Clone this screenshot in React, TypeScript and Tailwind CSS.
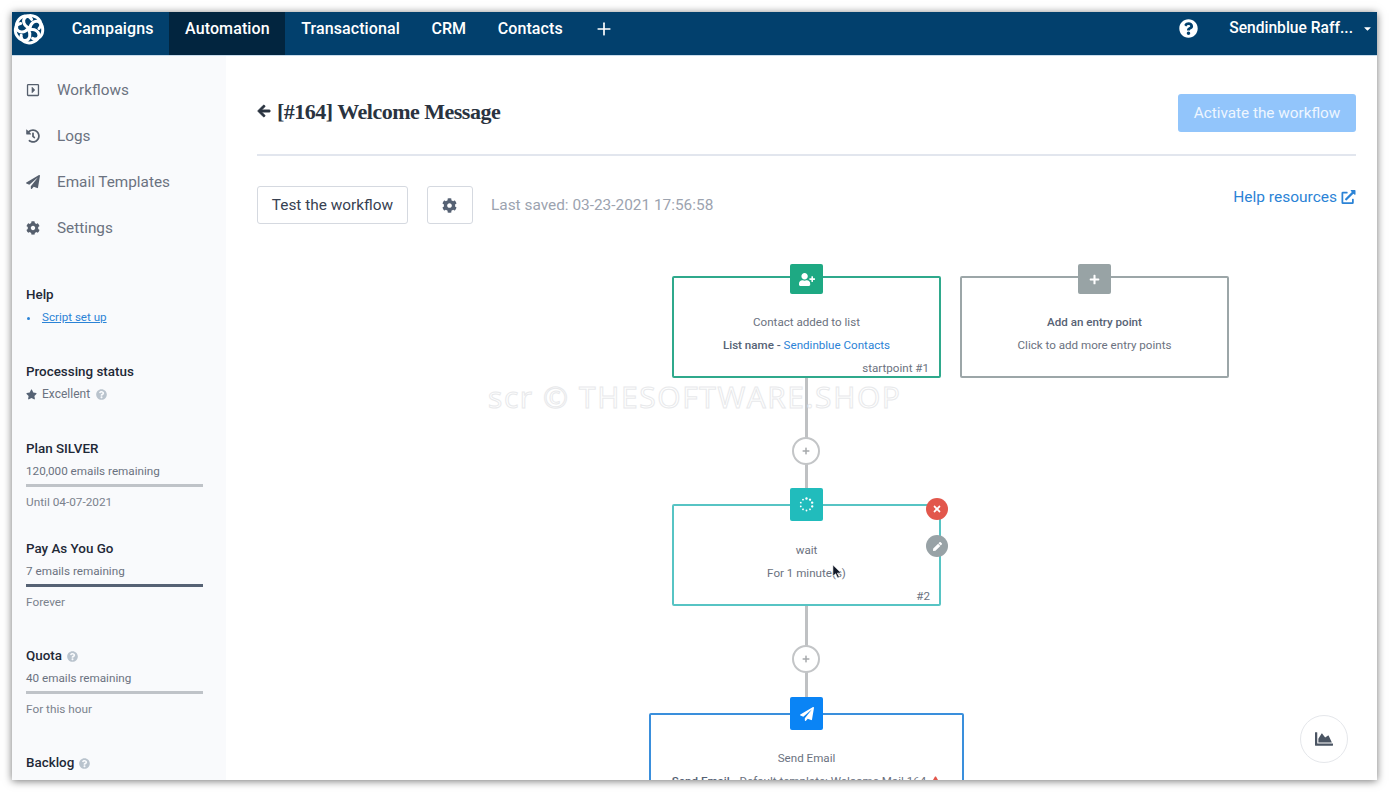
import type { ReactNode } from "react";
import { Plus } from "lucide-react";
import {
  FaRegCaretSquareRight,
  FaHistory,
  FaPaperPlane,
  FaCog,
  FaStar,
  FaQuestionCircle,
  FaArrowLeft,
  FaExternalLinkAlt,
  FaUserPlus,
  FaTimes,
  FaPen,
  FaPlus,
  FaChartArea,
  FaCaretDown,
  FaExclamationTriangle,
} from "react-icons/fa";

const tabs = ["Campaigns", "Automation", "Transactional", "CRM", "Contacts"];

function Logo() {
  const petals = [0, 72, 144, 216, 288];
  return (
    <svg viewBox="0 0 32 32" className="h-[32px] w-[32px]" fill="none" stroke="#fff" strokeWidth="3" strokeLinecap="round">
      {petals.map((a) => (
        <g key={a} transform={`rotate(${a} 16 16)`}>
          <path d="M16 15C11 13 9 8 12 4.6C16 1 24 2.5 27 8C28.5 11 27.5 14 26 15.5" />
        </g>
      ))}
    </svg>
  );
}

function TopBar() {
  return (
    <header className="flex h-[44px] shrink-0 items-stretch border-b border-[#c9dcec] bg-[#02406d] text-white">
      <div className="flex w-[44px] items-center pb-[10px] pl-[1px]">
        <Logo />
      </div>
      {tabs.map((t) => (
        <a
          key={t}
          className={`flex items-center px-[15.75px] pb-[10px] text-[16px] font-medium tracking-[0.1px] ${t === "Automation" ? "bg-[#02253f]" : ""}`}
        >
          {t}
        </a>
      ))}
      <div className="flex items-center pb-[10px] pl-[15px]">
        <Plus className="h-[20px] w-[20px]" strokeWidth={2} />
      </div>
      <div className="ml-auto flex items-center pb-[10px] pr-[4px]">
        <FaQuestionCircle className="h-[19px] w-[19px]" />
        <span className="ml-[31px] text-[15.6px] font-medium">Sendinblue Raff...</span>
        <FaCaretDown className="ml-[9px] h-[11px] w-[11px]" />
      </div>
    </header>
  );
}

function NavItem({ icon, label }: { icon: ReactNode; label: string }) {
  return (
    <div className="flex h-[46px] items-center text-[15.3px] text-[#6b7280]">
      <span className="flex w-[31px] items-center text-[#565f6d]">{icon}</span>
      {label}
    </div>
  );
}

function Hint() {
  return <FaQuestionCircle className="h-[11px] w-[11px] text-[#b9c3cd]" />;
}

function Quota({
  title,
  hint,
  remaining,
  until,
  dark,
  className,
}: {
  title: string;
  hint?: boolean;
  remaining: string;
  until: string;
  dark?: boolean;
  className: string;
}) {
  return (
    <div className={className}>
      <div className="flex h-[20px] items-center gap-[5px] text-[13.4px] font-medium text-[#1f2937]">
        {title}
        {hint && <Hint />}
      </div>
      <div className="mt-[3px] h-[18px] text-[11.7px] leading-[18px] text-[#6b7280]">{remaining}</div>
      <div className={`mt-[4px] h-[3px] w-[177px] ${dark ? "bg-[#566274]" : "bg-[#bfc3c8]"}`} />
      <div className="mt-[6px] h-[18px] text-[11.8px] leading-[18px] text-[#7b828d]">{until}</div>
    </div>
  );
}

function Sidebar() {
  return (
    <aside className="w-[214px] shrink-0 overflow-hidden bg-[#f9fafc] pl-[14px] pt-[11px]">
      <NavItem icon={<FaRegCaretSquareRight className="h-[14px] w-[14px]" />} label="Workflows" />
      <NavItem icon={<FaHistory className="h-[14px] w-[14px]" />} label="Logs" />
      <NavItem icon={<FaPaperPlane className="h-[14px] w-[14px]" />} label="Email Templates" />
      <NavItem icon={<FaCog className="h-[14px] w-[14px]" />} label="Settings" />

      <div className="mt-[34px] flex h-[20px] items-center text-[13.4px] font-medium text-[#1f2937]">Help</div>
      <div className="mt-[4px] flex h-[18px] items-center text-[11.6px] text-[#2b83d6]">
        <span className="ml-[1px] h-[3px] w-[3px] rounded-full bg-[#2b83d6]" />
        <a className="ml-[12px] underline">Script set up</a>
      </div>

      <div className="mt-[35px] flex h-[20px] items-center text-[13.4px] font-medium text-[#1f2937]">Processing status</div>
      <div className="mt-[3px] flex h-[18px] items-center text-[12px] text-[#6b7280]">
        <FaStar className="h-[11px] w-[11px] text-[#566274]" />
        <span className="ml-[5px] mr-[6px]">Excellent</span>
        <Hint />
      </div>

      <Quota className="mt-[36px]" title="Plan SILVER" remaining="120,000 emails remaining" until="Until 04-07-2021" />
      <Quota className="mt-[28px]" title="Pay As You Go" remaining="7 emails remaining" until="Forever" dark />
      <Quota className="mt-[35px]" title="Quota" hint remaining="40 emails remaining" until="For this hour" />
      <div className="mt-[35px] flex h-[20px] items-center gap-[5px] text-[13.4px] font-medium text-[#1f2937]">
        Backlog
        <Hint />
      </div>
    </aside>
  );
}

function WaitIcon() {
  const dots = [0, 36, 72, 108, 144, 180, 216, 252, 288, 324];
  return (
    <svg viewBox="0 0 14 14" className="h-[15px] w-[15px]" fill="#fff">
      {dots.map((a) => (
        <circle key={a} cx="7" cy="1.4" r={a < 110 ? 1.1 : 0.85} transform={`rotate(${a} 7 7)`} />
      ))}
    </svg>
  );
}

function Node({ className, children }: { className: string; children: ReactNode }) {
  return (
    <div className={`absolute flex flex-col items-center rounded-[2px] border-2 bg-white text-[11.6px] text-[#6b7280] ${className}`}>
      {children}
    </div>
  );
}

function Badge({ className, children }: { className: string; children: ReactNode }) {
  return (
    <div className={`absolute left-[116px] flex w-[33px] items-center justify-center rounded-[2px] text-white ${className}`}>
      {children}
    </div>
  );
}

function AddStep({ className }: { className: string }) {
  return (
    <div className={`absolute flex h-[28px] w-[28px] items-center justify-center rounded-full border-2 border-[#c3c5c7] bg-white text-[#a6a9ac] ${className}`}>
      <FaPlus className="h-[8px] w-[8px]" />
    </div>
  );
}

function Canvas() {
  return (
    <div className="relative min-h-0 flex-1">
      {/* connectors */}
      <div className="absolute left-[548px] top-[154px] h-[126px] w-[2.5px] bg-[#bfc1c3]" />
      <div className="absolute left-[548px] top-[382px] h-[91px] w-[2.5px] bg-[#bfc1c3]" />

      <Node className="left-[415px] top-[52px] h-[102px] w-[269px] border-[#2fa98c]">
        <Badge className="top-[-14px] h-[30px] bg-[#1ea983]">
          <FaUserPlus className="h-[15px] w-[16px]" />
        </Badge>
        <div className="mt-[35px] h-[18px] leading-[18px]">Contact added to list</div>
        <div className="mt-[5px] h-[18px] leading-[18px]">
          <span className="font-medium text-[#566274]">List name - </span>
          <span className="text-[#2b83d6]">Sendinblue Contacts</span>
        </div>
        <span className="absolute bottom-0 right-[10px] leading-[16px]">startpoint #1</span>
      </Node>

      <Node className="left-[703px] top-[52px] h-[102px] w-[269px] border-[#9ca6a8]">
        <Badge className="top-[-14px] h-[30px] bg-[#98a3a5]">
          <FaPlus className="h-[11px] w-[11px]" />
        </Badge>
        <div className="mt-[35px] h-[18px] font-medium leading-[18px] text-[#566274]">Add an entry point</div>
        <div className="mt-[5px] h-[18px] leading-[18px]">Click to add more entry points</div>
      </Node>

      <AddStep className="left-[535px] top-[213px]" />

      <Node className="left-[415px] top-[280px] h-[102px] w-[269px] border-[#57c4c4]">
        <Badge className="top-[-18px] h-[33px] bg-[#21bcbc]">
          <WaitIcon />
        </Badge>
        <div className="mt-[35px] h-[18px] leading-[18px]">wait</div>
        <div className="mt-[5px] h-[18px] leading-[18px]">For 1 minute(s)</div>
        <span className="absolute bottom-0 right-[9px] leading-[16px]">#2</span>
        <div className="absolute right-[-9px] top-[-8px] flex h-[22px] w-[22px] items-center justify-center rounded-full bg-[#e2574c] text-white">
          <FaTimes className="h-[10px] w-[10px]" />
        </div>
        <div className="absolute right-[-9px] top-[29px] flex h-[22px] w-[22px] items-center justify-center rounded-full bg-[#98a2a6] text-white">
          <FaPen className="h-[9px] w-[9px]" />
        </div>
      </Node>

      <AddStep className="left-[535px] top-[421px]" />

      <Node className="left-[392px] top-[489px] h-[120px] w-[315px] border-[#3a8fdc]">
        <Badge className="left-[139px] top-[-18px] h-[33px] bg-[#0a84f5]">
          <FaPaperPlane className="h-[14px] w-[14px]" />
        </Badge>
        <div className="mt-[34px] h-[18px] leading-[18px]">Send Email</div>
        <div className="mt-[5px] flex h-[18px] items-center gap-[4px] leading-[18px]">
          <span>
            <span className="font-medium text-[#566274]">Send Email - </span>Default template: Welcome Mail 164
          </span>
          <FaExclamationTriangle className="h-[11px] w-[11px] text-[#e2574c]" />
        </div>
      </Node>

      <div className="absolute left-[1043px] top-[491px] flex h-[48px] w-[48px] items-center justify-center rounded-full border border-[#e5e7eb] bg-white text-[#4b5563]">
        <FaChartArea className="h-[18px] w-[18px]" />
      </div>

      {/* mouse pointer from the recording */}
      <svg viewBox="0 0 12 16" className="absolute left-[575px] top-[340px] h-[15px] w-[11px]">
        <path d="M1 1V13L4 10.4L6.2 15L8 14.2L5.8 9.7H10Z" fill="#111827" stroke="#fff" strokeWidth="0.6" />
      </svg>
    </div>
  );
}

function Main() {
  return (
    <main className="flex min-w-0 flex-1 flex-col overflow-hidden bg-white pl-[31px] pr-[21px] pt-[38px]">
      <div className="flex h-[38px] shrink-0 items-center justify-between">
        <h1
          className="flex items-center gap-[6px] pb-[4px] text-[22px] font-bold tracking-[-0.5px] text-[#2a3340]"
          style={{ fontFamily: '"Liberation Serif", serif' }}
        >
          <FaArrowLeft className="h-[14px] w-[14px]" stroke="currentColor" strokeWidth={30} />
          [#164] Welcome Message
        </h1>
        <button className="h-[38px] w-[178px] rounded-[3px] bg-[#92c5fb] text-[15.3px] text-[#eef6ff]">Activate the workflow</button>
      </div>
      <div className="mt-[22px] h-[2px] shrink-0 bg-[#e2e6ee]" />
      <div className="mt-[30px] flex h-[38px] shrink-0 items-start">
        <button className="h-[38px] w-[151px] rounded-[3px] border border-[#d5d9e0] bg-white pt-[1px] text-[15.4px] text-[#374151]">
          Test the workflow
        </button>
        <button className="ml-[19px] flex h-[38px] w-[46px] items-center justify-center rounded-[3px] border border-[#d5d9e0] bg-white pr-[1px] text-[#566274]">
          <FaCog className="h-[15px] w-[15px]" />
        </button>
        <span className="ml-[18px] self-center pt-[1px] text-[15.4px] text-[#9ca3af]">Last saved: 03-23-2021 17:56:58</span>
        <a className="ml-auto mt-[1px] flex items-center gap-[4px] text-[15.5px] leading-[20px] text-[#2b83d6]">
          Help resources
          <FaExternalLinkAlt className="h-[14px] w-[15px]" />
        </a>
      </div>
      <Canvas />
    </main>
  );
}

export default function App() {
  return (
    <div className="relative h-[792px] w-[1389px] overflow-hidden bg-white p-[12px]" style={{ fontFamily: "Roboto, sans-serif" }}>
      <div className="flex h-[768px] w-[1365px] flex-col overflow-hidden shadow-[0_1px_8px_rgba(0,0,0,0.55)]">
        <TopBar />
        <div className="flex min-h-0 flex-1">
          <Sidebar />
          <Main />
        </div>
      </div>
      <div
        className="pointer-events-none absolute left-[488px] top-[378px] whitespace-nowrap text-[30px] leading-[38px] tracking-[1.6px] text-transparent [-webkit-text-stroke:1px_#e8e9eb]"
        style={{ fontFamily: '"Open Sans", sans-serif' }}
      >
        scr © THESOFTWARE.SHOP
      </div>
    </div>
  );
}
